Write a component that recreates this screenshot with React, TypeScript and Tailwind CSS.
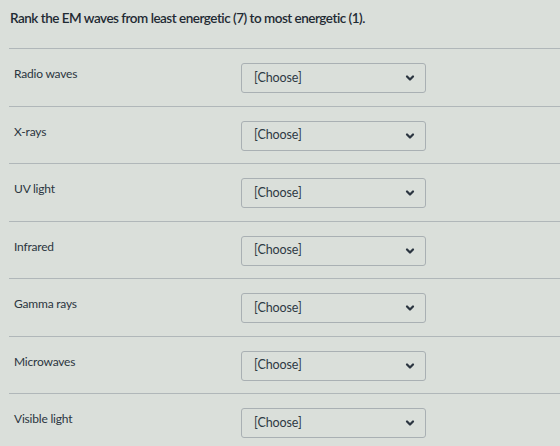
import { ChevronDown } from "lucide-react";

const waves = [
  "Radio waves",
  "X-rays",
  "UV light",
  "Infrared",
  "Gamma rays",
  "Microwaves",
  "Visible light",
];

function MatchRow({ label }: { label: string }) {
  return (
    <div className="flex h-[57.5px] border-t border-[#b0b7b9] pl-[5px]">
      <div className="w-[227px] pt-[16px] text-[12px] tracking-[-0.2px] text-[#2b3540]">{label}</div>
      <div className="pt-[14px]">
        <div className="flex h-[30px] w-[185px] items-center justify-between rounded-[3px] border border-[#a9b0b3] pl-[12px] pr-[9px]">
          <span className="text-[12.5px] tracking-[-0.1px] text-[#2e3a44]">[Choose]</span>
          <ChevronDown className="h-[12px] w-[12px] text-[#2b3540]" strokeWidth={4.5} />
        </div>
      </div>
    </div>
  );
}

export default function App() {
  return (
    <div className="h-[446px] w-[560px] overflow-hidden bg-[#dadfda] font-['Lato',sans-serif]">
      <div className="h-[48px] pl-[10px] pt-[8px] text-[13.5px] font-semibold tracking-[-0.5px] text-[#1f2a33]">
        Rank the EM waves from least energetic (7) to most energetic (1).
      </div>
      <div className="ml-[9px]">
        {waves.map((w) => (
          <MatchRow key={w} label={w} />
        ))}
      </div>
    </div>
  );
}
